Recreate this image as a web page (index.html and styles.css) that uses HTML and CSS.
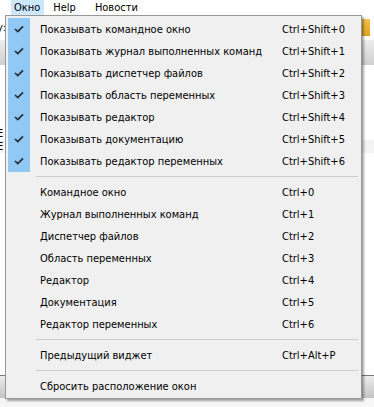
FILE: index.html
```html
<!DOCTYPE html>
<html lang="ru">
<head>
<meta charset="utf-8">
<link rel="stylesheet" href="styles.css">
</head>
<body>
<div class="menubar">
  <span class="mb-item active">Окно</span>
  <span class="mb-item help">Help</span>
  <span class="mb-item">Новости</span>
</div>
<div class="app">
  <div class="row-top"><span class="frag">ку:</span><span class="orange"></span></div>
  <div class="toolbar"></div>
  <div class="area-a"><span class="frag2">Е</span></div>
  <div class="band"><span class="frag2">Е</span></div>
  <div class="area-b"></div>
  <div class="status"></div>
  <div class="foot"></div>
</div>

<div class="menu">
  <div class="group checked">
    <div class="item"><span class="ic"><svg width="10" height="8" viewBox="0 0 10 8"><path d="M1 4 L3.8 6.6 L9 1.4" fill="none" stroke="#2b2b2b" stroke-width="1.7"/></svg></span><span class="lbl">Показывать командное окно</span><span class="sc">Ctrl+Shift+0</span></div>
    <div class="item"><span class="ic"><svg width="10" height="8" viewBox="0 0 10 8"><path d="M1 4 L3.8 6.6 L9 1.4" fill="none" stroke="#2b2b2b" stroke-width="1.7"/></svg></span><span class="lbl">Показывать журнал выполненных команд</span><span class="sc">Ctrl+Shift+1</span></div>
    <div class="item"><span class="ic"><svg width="10" height="8" viewBox="0 0 10 8"><path d="M1 4 L3.8 6.6 L9 1.4" fill="none" stroke="#2b2b2b" stroke-width="1.7"/></svg></span><span class="lbl">Показывать диспетчер файлов</span><span class="sc">Ctrl+Shift+2</span></div>
    <div class="item"><span class="ic"><svg width="10" height="8" viewBox="0 0 10 8"><path d="M1 4 L3.8 6.6 L9 1.4" fill="none" stroke="#2b2b2b" stroke-width="1.7"/></svg></span><span class="lbl">Показывать область переменных</span><span class="sc">Ctrl+Shift+3</span></div>
    <div class="item"><span class="ic"><svg width="10" height="8" viewBox="0 0 10 8"><path d="M1 4 L3.8 6.6 L9 1.4" fill="none" stroke="#2b2b2b" stroke-width="1.7"/></svg></span><span class="lbl">Показывать редактор</span><span class="sc">Ctrl+Shift+4</span></div>
    <div class="item"><span class="ic"><svg width="10" height="8" viewBox="0 0 10 8"><path d="M1 4 L3.8 6.6 L9 1.4" fill="none" stroke="#2b2b2b" stroke-width="1.7"/></svg></span><span class="lbl">Показывать документацию</span><span class="sc">Ctrl+Shift+5</span></div>
    <div class="item"><span class="ic"><svg width="10" height="8" viewBox="0 0 10 8"><path d="M1 4 L3.8 6.6 L9 1.4" fill="none" stroke="#2b2b2b" stroke-width="1.7"/></svg></span><span class="lbl">Показывать редактор переменных</span><span class="sc">Ctrl+Shift+6</span></div>
  </div>
  <div class="sep"></div>
  <div class="group">
    <div class="item"><span class="ic"></span><span class="lbl">Командное окно</span><span class="sc">Ctrl+0</span></div>
    <div class="item"><span class="ic"></span><span class="lbl">Журнал выполненных команд</span><span class="sc">Ctrl+1</span></div>
    <div class="item"><span class="ic"></span><span class="lbl">Диспетчер файлов</span><span class="sc">Ctrl+2</span></div>
    <div class="item"><span class="ic"></span><span class="lbl">Область переменных</span><span class="sc">Ctrl+3</span></div>
    <div class="item"><span class="ic"></span><span class="lbl">Редактор</span><span class="sc">Ctrl+4</span></div>
    <div class="item"><span class="ic"></span><span class="lbl">Документация</span><span class="sc">Ctrl+5</span></div>
    <div class="item"><span class="ic"></span><span class="lbl">Редактор переменных</span><span class="sc">Ctrl+6</span></div>
  </div>
  <div class="sep"></div>
  <div class="group">
    <div class="item"><span class="ic"></span><span class="lbl">Предыдущий виджет</span><span class="sc">Ctrl+Alt+P</span></div>
  </div>
  <div class="sep"></div>
  <div class="group">
    <div class="item"><span class="ic"></span><span class="lbl">Сбросить расположение окон</span><span class="sc"></span></div>
  </div>
</div>
</body>
</html>
```

FILE: styles.css
```css
* { box-sizing: border-box; }
html, body { margin: 0; padding: 0; }
body {
  width: 374px;
  height: 407px;
  overflow: hidden;
  background: #ffffff;
  font-family: "DejaVu Sans Condensed", "DejaVu Sans", sans-serif;
  font-stretch: condensed;
  font-size: 11px;
  color: #000;
  position: relative;
}

.menubar {
  height: 15px;
  display: flex;
  align-items: stretch;
  padding-left: 11px;
  background: #ffffff;
}
.mb-item {
  display: flex;
  align-items: center;
  padding: 0 4px 0 3px;
  margin-right: 6px;
  line-height: 15px;
}
.mb-item.help { padding-right: 10px; }
.mb-item.active {
  background: #cce8ff;
}

.app { display: flex; flex-direction: column; }
.row-top {
  height: 25px;
  display: flex;
  align-items: center;
  justify-content: space-between;
}
.frag { margin-left: -9px; }
.frag2 { margin-left: -3px; }
.orange {
  width: 8px;
  height: 17px;
  background: linear-gradient(#f2c34e, #e0a21e);
  margin-right: 4px;
}
.toolbar {
  height: 25px;
  background: linear-gradient(#ededed, #cfcfcf);
}
.area-a { height: 75px; display: flex; align-items: flex-end; }
.band { height: 13px; background: #f3f3f3; display: flex; align-items: center; }
.area-b { height: 222px; }
.status {
  height: 23px;
  border-top: 1px solid #7a7a7a;
  background: linear-gradient(#ececec, #c4c4c4);
}
.foot { height: 9px; background: #f6f6f6; }

.menu {
  position: absolute;
  left: 5px;
  top: 15px;
  width: 357px;
  height: 384px;
  background: #f0f0f0;
  border: 1px solid #979797;
  box-shadow: 2px 2px 2px rgba(0, 0, 0, 0.35);
  padding: 2px 0 0 2px;
  display: flex;
  flex-direction: column;
}
.group { display: flex; flex-direction: column; }
.item {
  height: 22px;
  display: grid;
  grid-template-columns: 22px 252px 1fr;
  align-items: center;
  white-space: nowrap;
}
.ic {
  height: 22px;
  display: flex;
  align-items: center;
  justify-content: center;
}
.checked .ic { background: #90c8f6; }
.lbl { padding-left: 10px; }
.sep {
  height: 9px;
  margin: 0 3px 0 28px;
  padding-top: 4px;
}
.sep::before {
  content: "";
  display: block;
  height: 1px;
  background: #cdcdcd;
}
```
